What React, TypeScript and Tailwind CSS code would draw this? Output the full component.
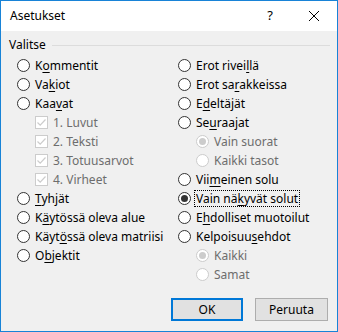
import type { ReactNode } from "react";

type Item = {
	label: ReactNode;
	kind: "radio" | "check";
	indent?: boolean;
	disabled?: boolean;
	checked?: boolean;
	focused?: boolean;
};

function u(text: string, idx: number) {
	return (
		<>
			{text.slice(0, idx)}
			<span className="underline underline-offset-2">{text[idx]}</span>
			{text.slice(idx + 1)}
		</>
	);
}

const left: Item[] = [
	{ kind: "radio", label: u("Kommentit", 1) },
	{ kind: "radio", label: u("Vakiot", 2) },
	{ kind: "radio", label: u("Kaavat", 3) },
	{ kind: "check", indent: true, disabled: true, checked: true, label: "1. Luvut" },
	{ kind: "check", indent: true, disabled: true, checked: true, label: "2. Teksti" },
	{ kind: "check", indent: true, disabled: true, checked: true, label: "3. Totuusarvot" },
	{ kind: "check", indent: true, disabled: true, checked: true, label: "4. Virheet" },
	{ kind: "radio", label: u("Tyhjät", 0) },
	{ kind: "radio", label: u("Käytössä oleva alue", 1) },
	{ kind: "radio", label: u("Käytössä oleva matriisi", 4) },
	{ kind: "radio", label: u("Objektit", 1) },
];

const right: Item[] = [
	{ kind: "radio", label: u("Erot riveillä", 10) },
	{ kind: "radio", label: u("Erot sarakkeissa", 7) },
	{ kind: "radio", label: u("Edeltäjät", 1) },
	{ kind: "radio", label: u("Seuraajat", 2) },
	{ kind: "radio", indent: true, disabled: true, checked: true, label: "Vain suorat" },
	{ kind: "radio", indent: true, disabled: true, label: "Kaikki tasot" },
	{ kind: "radio", label: u("Viimeinen solu", 3) },
	{ kind: "radio", checked: true, focused: true, label: u("Vain näkyvät solut", 7) },
	{ kind: "radio", label: u("Ehdolliset muotoilut", 1) },
	{ kind: "radio", label: u("Kelpoisuusehdot", 9) },
	{ kind: "radio", indent: true, disabled: true, checked: true, label: "Kaikki" },
	{ kind: "radio", indent: true, disabled: true, label: "Samat" },
];

function Radio({ checked, disabled }: { checked?: boolean; disabled?: boolean }) {
	return (
		<span
			className={`flex h-[13px] w-[13px] shrink-0 items-center justify-center rounded-full border bg-white ${
				disabled ? "border-[#cccccc]" : "border-[#333333]"
			}`}
		>
			{checked && (
				<span className={`h-[7px] w-[7px] rounded-full ${disabled ? "bg-[#cccccc]" : "bg-[#333333]"}`} />
			)}
		</span>
	);
}

function Check() {
	return (
		<span className="flex h-[13px] w-[13px] shrink-0 items-center justify-center border border-[#cccccc] bg-white">
			<svg width="11" height="11" viewBox="0 0 11 11">
				<path d="M1.5 5.5 L4.2 8.2 L9.5 2.5" fill="none" stroke="#cccccc" strokeWidth="1.2" />
			</svg>
		</span>
	);
}

function Row({ item }: { item: Item }) {
	return (
		<div className={`flex h-[19px] items-center gap-[5px] ${item.indent ? "pl-[18px]" : ""}`}>
			{item.kind === "radio" ? <Radio checked={item.checked} disabled={item.disabled} /> : <Check />}
			<span
				className={`whitespace-nowrap leading-[15px] ${item.disabled ? "text-[#6d6d6d]" : "text-black"} ${
					item.focused ? "outline outline-1 outline-dotted outline-black -ml-px px-px" : ""
				}`}
			>
				{item.label}
			</span>
		</div>
	);
}

export default function App() {
	return (
		<div
			className="flex h-[332px] w-[338px] flex-col border border-[#1883d7] bg-[#f0f0f0] text-[12px] text-black"
			style={{ fontFamily: '"Noto Sans", sans-serif' }}
		>
			<div className="flex h-[30px] shrink-0 items-center bg-white pl-[9px] pr-[18px]">
				<span className="flex-1 text-[12px]">Asetukset</span>
				<span className="mr-[36px] text-[13px]">?</span>
				<svg width="10" height="10" viewBox="0 0 10 10">
					<path d="M0 0 L10 10 M10 0 L0 10" stroke="#000" strokeWidth="1" />
				</svg>
			</div>
			<div className="flex flex-1 flex-col px-[8px] pt-[6px]">
				<div className="flex h-[16px] items-center gap-[6px]">
					<span>Valitse</span>
					<span className="mr-[-1px] h-px flex-1 bg-[#dcdcdc]" />
				</div>
				<div className="mt-[3px] flex pl-[8px]">
					<div className="w-[161px]">
						{left.map((it, i) => (
							<Row key={i} item={it} />
						))}
					</div>
					<div>
						{right.map((it, i) => (
							<Row key={i} item={it} />
						))}
					</div>
				</div>
				<div className="mt-auto mb-[10px] flex justify-end gap-[12px] pr-[1px]">
					<button className="h-[23px] w-[72px] border-2 border-[#0078d7] bg-[#e1e1e1]">OK</button>
					<button className="h-[23px] w-[73px] border border-[#adadad] bg-[#e1e1e1]">Peruuta</button>
				</div>
			</div>
		</div>
	);
}
